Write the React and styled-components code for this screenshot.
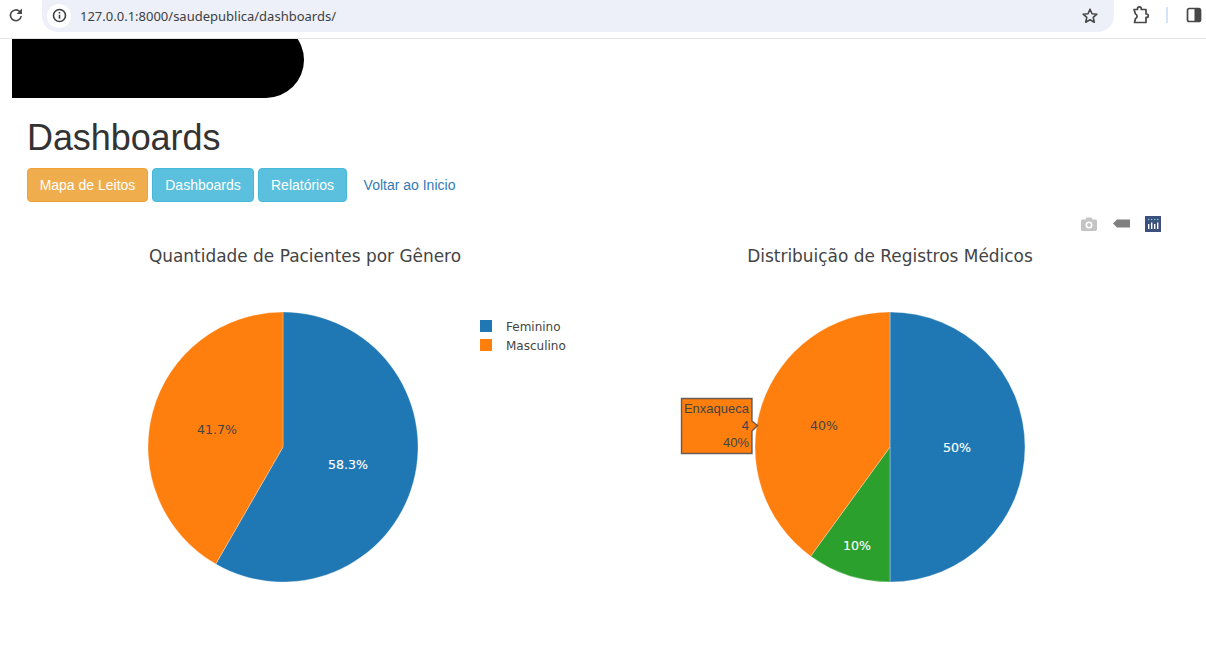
import React from "react";
import styled, { createGlobalStyle } from "styled-components";

const Global = createGlobalStyle`
  html, body { margin: 0; padding: 0; background: #fff; overflow: hidden; }
  * { box-sizing: border-box; }
  body { font-family: "Liberation Sans", Arial, sans-serif; font-size: 14px; color: #333; }
`;

const Page = styled.div`
  width: 1206px;
  height: 653px;
  overflow: hidden;
`;

const Toolbar = styled.header`
  height: 39px;
  border-bottom: 1px solid #e1e3e6;
  display: flex;
  align-items: flex-start;
  background: #fff;
`;

const ToolIcon = styled.span`
  width: 20px;
  height: 20px;
  margin: ${(p) => (p.$inBox ? 0 : 5)}px ${(p) => p.$mr || 0}px 0 ${(p) => p.$ml || 0}px;
  display: flex;
  align-items: center;
  justify-content: center;
  flex: none;
`;

const Omnibox = styled.div`
  width: 1072px;
  height: 32px;
  margin-left: 16px;
  background: #edf0f8;
  border-radius: 0 0 16px 16px;
  display: flex;
  align-items: center;
  padding-left: 5px;
  flex: none;
`;

const InfoBadge = styled.span`
  width: 24px;
  height: 24px;
  margin-top: -1px;
  border-radius: 50%;
  background: #fff;
  display: flex;
  align-items: center;
  justify-content: center;
  flex: none;
`;

const Url = styled.span`
  margin-left: 9px;
  margin-top: -1px;
  font-family: "Noto Sans", sans-serif;
  font-size: 13px;
  color: #3c4043;
  flex: 1;
  white-space: nowrap;
`;

const ToolDivider = styled.span`
  width: 2px;
  height: 16px;
  margin: 7px 0 0 16px;
  background: #d3e3fd;
  flex: none;
`;

const Banner = styled.div`
  width: 292px;
  height: 59px;
  margin-left: 12px;
  overflow: hidden;
`;

const BannerShape = styled.div`
  height: 76px;
  margin-top: -17px;
  background: #000;
  border-radius: 0 38px 38px 0;
`;

const Content = styled.main`
  padding: 0 27px;
`;

const Title = styled.h1`
  margin: 20px 0 10px;
  font-size: 36px;
  line-height: 39.6px;
  font-weight: 500;
  letter-spacing: -0.08px;
  color: #333;
`;

const Actions = styled.nav`
  display: flex;
  gap: 4px;
`;

const ActionButton = styled.a`
  display: block;
  width: ${(p) => p.$w}px;
  height: 34px;
  padding: 6px 0;
  text-align: center;
  white-space: nowrap;
  line-height: 20px;
  border: 1px solid ${(p) => (p.$tone === "warning" ? "#eea236" : p.$tone === "info" ? "#46b8da" : "transparent")};
  border-radius: 4px;
  background: ${(p) => (p.$tone === "warning" ? "#f0ad4e" : p.$tone === "info" ? "#5bc0de" : "transparent")};
  color: ${(p) => (p.$tone ? "#fff" : "#337ab7")};
  font-size: 14px;
`;

const Figure = styled.section`
  position: relative;
  height: 451px;
`;

const ModeBar = styled.div`
  position: absolute;
  top: 5px;
  right: 45px;
  display: flex;
  align-items: center;
  height: 18px;
`;

const ModeIcon = styled.svg`
  display: block;
  flex: none;
  margin-left: ${(p) => p.$gap || 0}px;
`;

const Chart = styled.svg`
  display: block;
  width: 1206px;
  height: 451px;
  margin-top: 8px;
`;

const ChartTitle = styled.text`
  font-family: "DejaVu Sans", Verdana, sans-serif;
  font-size: 16.95px;
  fill: #444;
  text-anchor: middle;
`;

const SliceLabel = styled.text`
  font-family: "DejaVu Sans", Verdana, sans-serif;
  font-size: 12.6px;
  fill: ${(p) => (p.$light ? "#fff" : "#444")};
  stroke: ${(p) => (p.$light ? "#fff" : "none")};
  stroke-width: 0.12px;
  text-anchor: middle;
`;

const LegendLabel = styled.text`
  font-family: "DejaVu Sans", Verdana, sans-serif;
  font-size: 12px;
  fill: #444;
`;

const HoverLine = styled.text`
  font-family: "Liberation Sans", Arial, sans-serif;
  font-size: 13px;
  fill: #444;
  text-anchor: end;
`;

const polar = (cx, cy, r, f) => {
  const a = f * 2 * Math.PI;
  return [cx + r * Math.sin(a), cy - r * Math.cos(a)];
};

const slice = (cx, cy, r, from, to) => {
  const [x1, y1] = polar(cx, cy, r, from);
  const [x2, y2] = polar(cx, cy, r, to);
  return `M${cx} ${cy}L${x1} ${y1}A${r} ${r} 0 ${to - from > 0.5 ? 1 : 0} 1 ${x2} ${y2}Z`;
};

const BLUE = "#1f77b4";
const ORANGE = "#ff7f0e";
const GREEN = "#2ca02c";

const Pie = ({ cx, cy, parts }) => {
  let at = 0;
  return parts.map(([value, fill]) => {
    const d = slice(cx, cy, 135, at, at + value);
    at += value;
    return <path key={fill} d={d} fill={fill} stroke="#fff" strokeOpacity="0.5" strokeWidth="0.6" />;
  });
};

const App = () => (
  <Page>
    <Global />
    <Toolbar>
      <ToolIcon $ml={6}>
        <svg width="16" height="16" viewBox="0 0 16 16" fill="none">
          <path d="M13.2 9a5.4 5.4 0 1 1-1.6-4.6L13 5.8" stroke="#474747" strokeWidth="1.6" />
          <path d="M14 1.6V7H8.6Z" fill="#474747" />
        </svg>
      </ToolIcon>
      <Omnibox>
        <InfoBadge>
          <svg width="15" height="15" viewBox="0 0 15 15" fill="none">
            <circle cx="7.5" cy="7.5" r="6" stroke="#3c4043" strokeWidth="1.6" />
            <path d="M7.5 6.8v4M7.5 4v1.5" stroke="#3c4043" strokeWidth="1.6" />
          </svg>
        </InfoBadge>
        <Url>127.0.0.1:8000/saudepublica/dashboards/</Url>
        <ToolIcon $inBox $mr={14}>
          <svg width="18" height="18" viewBox="0 0 18 18" fill="none" stroke="#474747" strokeWidth="1.6" strokeLinejoin="round">
            <path d="M9 2.2l2 4.5 4.9.5-3.7 3.2 1.1 4.8L9 12.7l-4.3 2.5 1.1-4.8L2.1 7.2 7 6.7z" />
          </svg>
        </ToolIcon>
      </Omnibox>
      <ToolIcon $ml={16}>
        <svg width="20" height="20" viewBox="0 0 20 20" fill="none" stroke="#474747" strokeWidth="1.7" strokeLinejoin="round">
          <path d="M4 4.5H7.5V3.8a1.9 1.9 0 0 1 3.8 0V4.5H16V9h.6a1.7 1.7 0 0 1 0 3.4H16V17.5H4.5L5.5 13.5a2.4 2.4 0 0 0 0-4.5Z" />
        </svg>
      </ToolIcon>
      <ToolDivider />
      <ToolIcon $ml={16}>
        <svg width="16" height="16" viewBox="0 0 16 16">
          <rect x="1.5" y="1.5" width="13" height="13" rx="1.8" fill="none" stroke="#474747" strokeWidth="1.7" />
          <path d="M8.5 1.5h4.2a1.8 1.8 0 0 1 1.8 1.8v9.4a1.8 1.8 0 0 1-1.8 1.8H8.5Z" fill="#474747" />
        </svg>
      </ToolIcon>
    </Toolbar>
    <Banner>
      <BannerShape />
    </Banner>
    <Content>
      <Title>Dashboards</Title>
      <Actions>
        <ActionButton $w={121} $tone="warning">Mapa de Leitos</ActionButton>
        <ActionButton $w={102} $tone="info">Dashboards</ActionButton>
        <ActionButton $w={89} $tone="info">Relatórios</ActionButton>
        <ActionButton $w={117}>Voltar ao Inicio</ActionButton>
      </Actions>
    </Content>
    <Figure>
      <Chart viewBox="0 210 1206 451">
        <ChartTitle x="305" y="262">Quantidade de Pacientes por Gênero</ChartTitle>
        <ChartTitle x="890" y="262">Distribuição de Registros Médicos</ChartTitle>
        <Pie cx={283} cy={447} parts={[[0.583, BLUE], [0.417, ORANGE]]} />
        <Pie cx={890} cy={447} parts={[[0.5, BLUE], [0.1, GREEN], [0.4, ORANGE]]} />
        <SliceLabel x="217" y="434">41.7%</SliceLabel>
        <SliceLabel x="348" y="469" $light>58.3%</SliceLabel>
        <SliceLabel x="824" y="430">40%</SliceLabel>
        <SliceLabel x="957" y="452" $light>50%</SliceLabel>
        <SliceLabel x="857" y="550" $light>10%</SliceLabel>
        <rect x="480" y="320" width="12" height="12" fill={BLUE} />
        <rect x="480" y="339" width="12" height="12" fill={ORANGE} />
        <LegendLabel x="506" y="331">Feminino</LegendLabel>
        <LegendLabel x="506" y="350">Masculino</LegendLabel>
        <path d="M681.5 398.5H752V421l5.5 4.5-5.5 5.5v22.5H681.5Z" fill={ORANGE} stroke="#444" strokeOpacity="0.8" strokeWidth="1.4" />
        <HoverLine x="749" y="413">Enxaqueca</HoverLine>
        <HoverLine x="749" y="429.5">4</HoverLine>
        <HoverLine x="749" y="447">40%</HoverLine>
      </Chart>
      <ModeBar>
        <ModeIcon width="16" height="14" viewBox="0 0 16 14">
          <path fillRule="evenodd" fill="#c4c4c4" d="M1.5 2.5H4.5L5.5 .5h5l1 2h3a1.5 1.5 0 0 1 1.5 1.5v8.5a1.5 1.5 0 0 1-1.5 1.5H1.5A1.5 1.5 0 0 1 0 12.5V4a1.5 1.5 0 0 1 1.5-1.5ZM8 4.5a3.5 3.5 0 1 0 0 7 3.5 3.5 0 0 0 0-7Zm0 1.6a1.9 1.9 0 1 1 0 3.8 1.9 1.9 0 0 1 0-3.8Z" />
        </ModeIcon>
        <ModeIcon $gap={16} width="17" height="9" viewBox="0 0 17 9">
          <path d="M0 4.5 4 .5h13v8H4Z" fill="#7f7f7f" />
        </ModeIcon>
        <ModeIcon $gap={15} width="16" height="16" viewBox="0 0 16 16">
          <rect width="16" height="16" fill="#3d4f7c" />
          <g fill="#fff">
            <rect x="3" y="8" width="1.4" height="5" />
            <rect x="6" y="6.5" width="1.4" height="6.5" />
            <rect x="9" y="8" width="1.4" height="5" />
            <rect x="12" y="6.5" width="1.4" height="6.5" />
          </g>
          <g fill="#69d3c8">
            <circle cx="3.7" cy="3.5" r=".8" />
            <circle cx="6.7" cy="3.5" r=".8" />
            <circle cx="9.7" cy="3.5" r=".8" />
            <circle cx="12.7" cy="3.5" r=".8" />
          </g>
        </ModeIcon>
      </ModeBar>
    </Figure>
  </Page>
);

export default App;
